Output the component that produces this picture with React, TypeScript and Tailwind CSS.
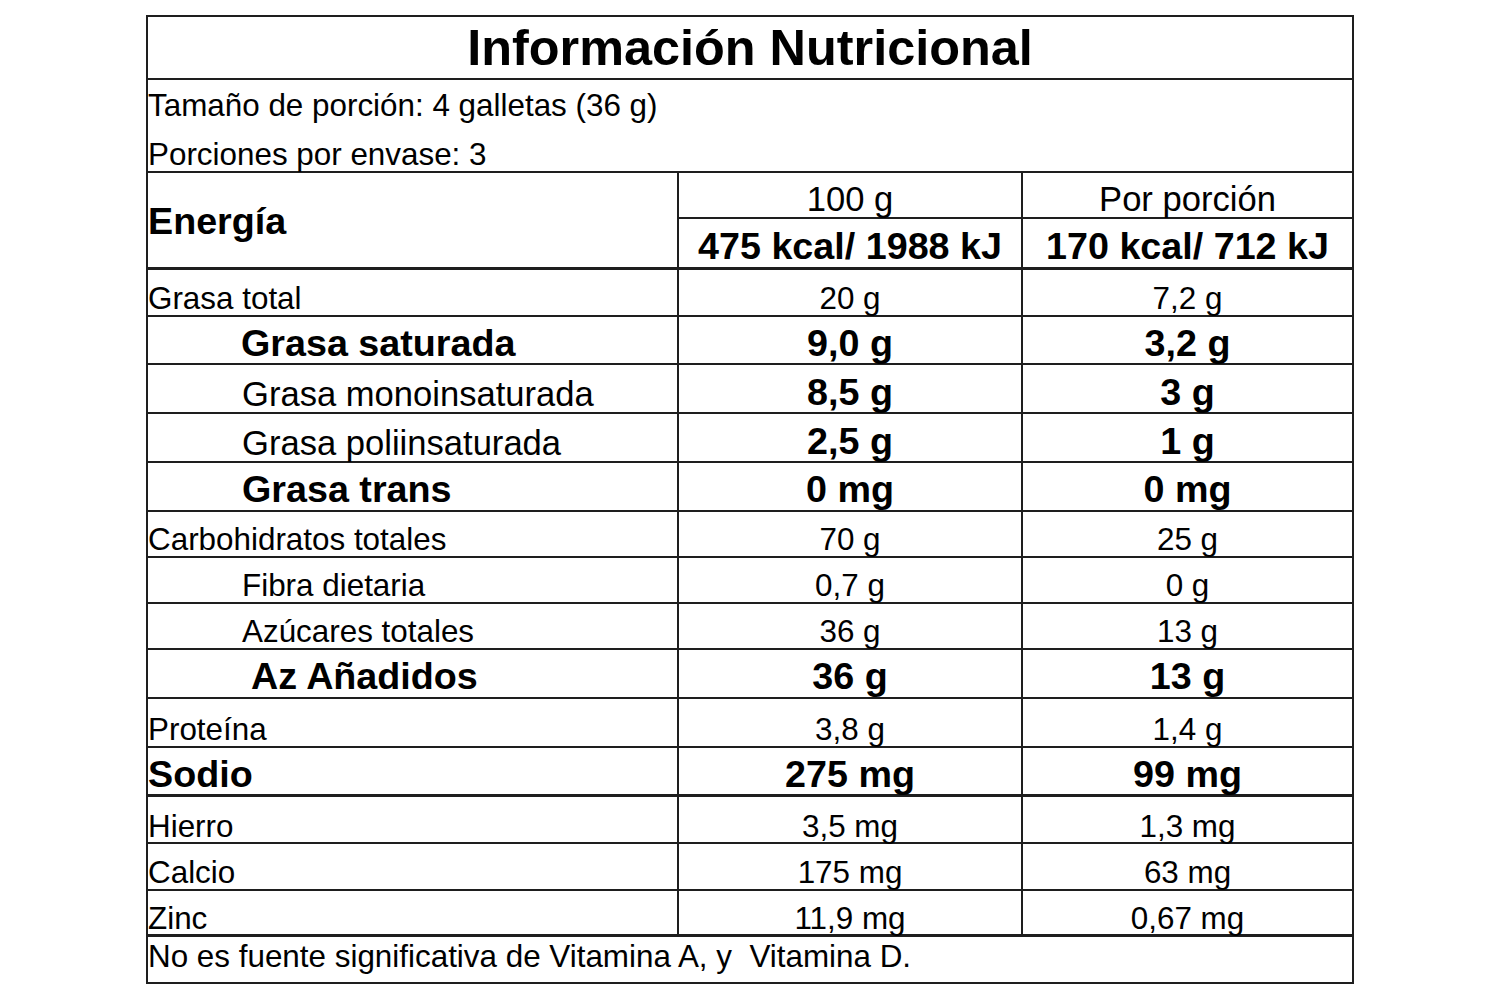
import React from 'react';

type Row = {
  label: string;
  v1: string;
  v2: string;
  row: string;
  label_cls: string;
  val_cls: string;
};

const rows: Row[] = [
  { label: 'Grasa total', v1: '20 g', v2: '7,2 g', row: 'h-[47px] border-b-2', label_cls: 'text-[31.4px] pb-[1px]', val_cls: 'text-[31.4px] pb-[1px]' },
  { label: 'Grasa saturada', v1: '9,0 g', v2: '3,2 g', row: 'h-[48px] border-b-2', label_cls: 'text-[37.7px] font-bold pl-[93px] pb-0', val_cls: 'text-[37.7px] font-bold pb-0' },
  { label: 'Grasa monoinsaturada', v1: '8,5 g', v2: '3 g', row: 'h-[49px] border-b-2', label_cls: 'text-[34.6px] pl-[94px] pb-0', val_cls: 'text-[37.7px] font-bold pb-0' },
  { label: 'Grasa poliinsaturada', v1: '2,5 g', v2: '1 g', row: 'h-[49px] border-b-2', label_cls: 'text-[34.6px] pl-[94px] pb-0', val_cls: 'text-[37.7px] font-bold pb-0' },
  { label: 'Grasa trans', v1: '0 mg', v2: '0 mg', row: 'h-[49px] border-b-2', label_cls: 'text-[37.7px] font-bold pl-[94px] pb-[1px]', val_cls: 'text-[37.7px] font-bold pb-[1px]' },
  { label: 'Carbohidratos totales', v1: '70 g', v2: '25 g', row: 'h-[46px] border-b-2', label_cls: 'text-[31.4px] pb-[1px]', val_cls: 'text-[31.4px] pb-[1px]' },
  { label: 'Fibra dietaria', v1: '0,7 g', v2: '0 g', row: 'h-[46px] border-b-2', label_cls: 'text-[31.4px] pl-[94px] pb-[1px]', val_cls: 'text-[31.4px] pb-[1px]' },
  { label: 'Azúcares totales', v1: '36 g', v2: '13 g', row: 'h-[46px] border-b-2', label_cls: 'text-[31.4px] pl-[94px] pb-[1px]', val_cls: 'text-[31.4px] pb-[1px]' },
  { label: 'Az Añadidos', v1: '36 g', v2: '13 g', row: 'h-[49px] border-b-2', label_cls: 'text-[37.7px] font-bold pl-[103px] pb-[1px]', val_cls: 'text-[37.7px] font-bold pb-[1px]' },
  { label: 'Proteína', v1: '3,8 g', v2: '1,4 g', row: 'h-[49px] border-b-2', label_cls: 'text-[31.4px] pb-[1px]', val_cls: 'text-[31.4px] pb-[1px]' },
  { label: 'Sodio', v1: '275 mg', v2: '99 mg', row: 'h-[49px] border-b-[3px]', label_cls: 'text-[37.7px] font-bold pb-0', val_cls: 'text-[37.7px] font-bold pb-0' },
  { label: 'Hierro', v1: '3,5 mg', v2: '1,3 mg', row: 'h-[47px] border-b-2', label_cls: 'text-[31.4px] pb-0', val_cls: 'text-[31.4px] pb-0' },
  { label: 'Calcio', v1: '175 mg', v2: '63 mg', row: 'h-[47px] border-b-2', label_cls: 'text-[31.4px] pb-[1px]', val_cls: 'text-[31.4px] pb-[1px]' },
  { label: 'Zinc', v1: '11,9 mg', v2: '0,67 mg', row: 'h-[46px] border-b-[3px]', label_cls: 'text-[31.4px] pb-0', val_cls: 'text-[31.4px] pb-0' },
];

export default function App() {
  return (
    <div className="w-[1500px] h-[1000px] bg-white pt-[15px] pl-[146px] font-['Liberation_Sans',Arial,sans-serif] text-black">
      <div className="w-[1208px] border-2 border-[#1e1e1e]">
        {/* title */}
        <div className="h-[63px] border-b-2 border-[#1e1e1e] pt-[6px] text-center text-[50.4px] font-bold leading-none">
          Información Nutricional
        </div>

        {/* serving */}
        <div className="h-[93px] border-b-2 border-[#1e1e1e] pt-[10px] text-[31.4px] leading-none">
          <p>Tamaño de porción: 4 galletas (36 g)</p>
          <p className="mt-[18px]">Porciones por envase: 3</p>
        </div>

        {/* energy */}
        <div className="grid grid-cols-[531px_344px_329px] h-[97px] border-b-[3px] border-[#1e1e1e]">
          <div className="flex items-center border-r-2 border-[#1e1e1e] pt-[4px] text-[37.7px] font-bold leading-none">
            Energía
          </div>
          <div className="flex flex-col border-r-2 border-[#1e1e1e]">
            <div className="h-[46px] flex items-end justify-center border-b-2 border-[#1e1e1e] pb-0 text-[34.6px] leading-none">100 g</div>
            <div className="flex-1 flex items-end justify-center pb-[1px] text-[37.7px] font-bold leading-none">475 kcal/ 1988 kJ</div>
          </div>
          <div className="flex flex-col">
            <div className="h-[46px] flex items-end justify-center border-b-2 border-[#1e1e1e] pb-0 text-[34.6px] leading-none">Por porción</div>
            <div className="flex-1 flex items-end justify-center pb-[1px] text-[37.7px] font-bold leading-none">170 kcal/ 712 kJ</div>
          </div>
        </div>

        {rows.map((r) => (
          <div key={r.label} className={`grid grid-cols-[531px_344px_329px] border-[#1e1e1e] ${r.row}`}>
            <div className={`flex items-end border-r-2 border-[#1e1e1e] leading-none ${r.label_cls}`}>{r.label}</div>
            <div className={`flex items-end justify-center border-r-2 border-[#1e1e1e] leading-none ${r.val_cls}`}>{r.v1}</div>
            <div className={`flex items-end justify-center leading-none ${r.val_cls}`}>{r.v2}</div>
          </div>
        ))}

        {/* footnote */}
        <div className="h-[45px] text-[31.4px] leading-[40px] whitespace-pre">
          No es fuente significativa de Vitamina A, y  Vitamina D.
        </div>
      </div>
    </div>
  );
}
